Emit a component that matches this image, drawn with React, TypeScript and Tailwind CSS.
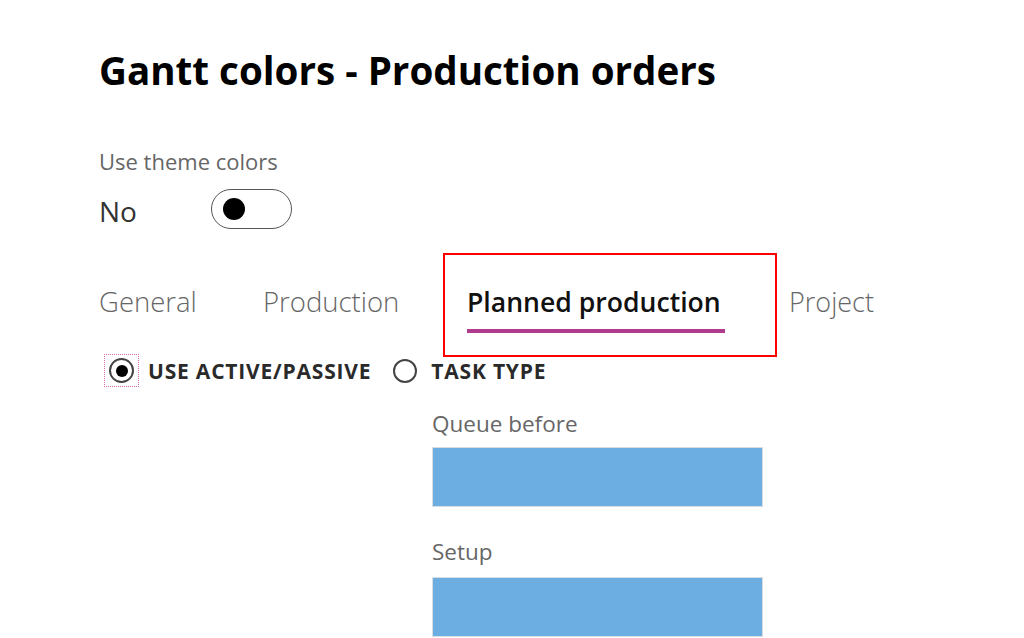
import React from "react";

export default function App() {
  return (
    <div
      className="w-[1024px] h-[638px] bg-white overflow-hidden relative"
      style={{ fontFamily: '"Open Sans", "Noto Sans", sans-serif' }}
    >
      <div className="pl-[99px] pt-[46px] flex flex-col">
        <h1 className="text-[38.6px] leading-[48px] font-bold text-black">
          Gantt colors - Production orders
        </h1>
        <div className="mt-[52px] text-[22px] leading-[30px] text-[#666]">Use theme colors</div>
        <div className="mt-[13px] flex items-center h-[40px]">
          <span className="text-[28px] leading-[36px] text-[#333] w-[112px] pt-[4px]">No</span>
          <div className="w-[81px] h-[40px] rounded-full border-[1.5px] border-[#555] flex items-center pl-[11px]">
            <div className="w-[22px] h-[22px] rounded-full bg-black" />
          </div>
        </div>
        <div className="mt-[24px] flex items-start">
          <div className="pt-[31px] w-[164px] text-[27.5px] leading-[36px] font-light text-[#666]">General</div>
          <div className="pt-[31px] w-[180px] text-[27.5px] leading-[36px] font-light text-[#666]">Production</div>
          <div className="w-[334px] h-[104px] border-2 border-[#f00] pl-[22px] pt-[29px] flex flex-col items-start">
            <div className="text-[26.6px] leading-[36px] font-semibold text-[#111]">Planned production</div>
            <div className="mt-[9px] h-[4px] w-[258px] bg-[#b03a8c]" />
          </div>
          <div className="pt-[31px] ml-[12px] text-[27px] leading-[36px] font-light text-[#666]">Project</div>
        </div>
        <div className="mt-[-3px] flex items-center h-[33px]">
          <div className="w-[35px] h-[33px] ml-[5px] border border-dotted border-[#d66ba8] flex items-center justify-center">
            <div className="w-[25px] h-[25px] rounded-full border-2 border-[#444] flex items-center justify-center">
              <div className="w-[12px] h-[12px] rounded-full bg-black" />
            </div>
          </div>
          <span className="ml-[9px] text-[21px] leading-[28px] font-bold text-[#2a2a2a] tracking-[0.8px]">USE ACTIVE/PASSIVE</span>
          <div className="ml-[22px] w-[24px] h-[24px] rounded-full border-2 border-[#444]" />
          <span className="ml-[14px] text-[21px] leading-[28px] font-bold text-[#2a2a2a] tracking-[0.8px]">TASK TYPE</span>
        </div>
        <div className="ml-[333px] mt-[22px] flex flex-col">
          <div className="text-[22.5px] leading-[30px] text-[#666]">Queue before</div>
          <div className="mt-[8px] w-[331px] h-[60px] bg-[#6daee2] border border-[#d8dde2]" />
          <div className="mt-[30px] text-[22.5px] leading-[30px] text-[#666]">Setup</div>
          <div className="mt-[10px] w-[331px] h-[60px] bg-[#6daee2] border border-[#d8dde2]" />
        </div>
      </div>
    </div>
  );
}
